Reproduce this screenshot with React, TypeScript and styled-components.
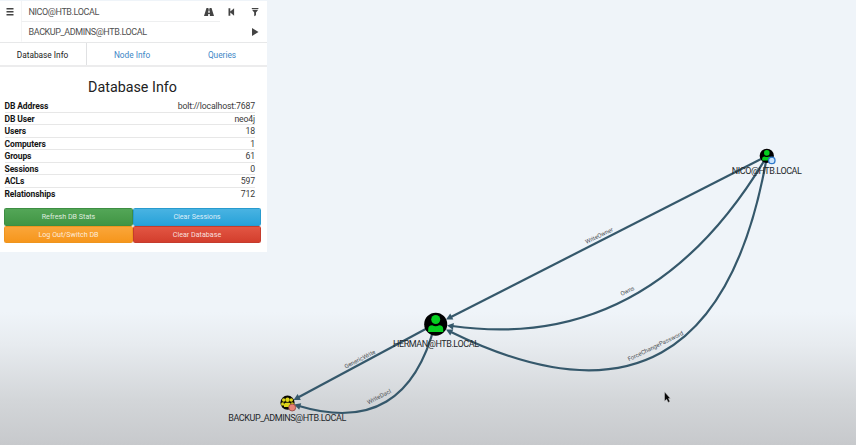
import React from "react";
import styled, { createGlobalStyle } from "styled-components";

const GlobalStyle = createGlobalStyle`
  *, *::before, *::after { box-sizing: border-box; }
  html, body { margin: 0; overflow: hidden; }
  body { font-family: Roboto, "Liberation Sans", sans-serif; }
`;

const Page = styled.div`
  display: grid;
  width: 856px;
  height: 445px;
  background: linear-gradient(#eff4f9 0, #eff4f9 312px, #e7ebef 345px, #d3d6d9 400px, #c7c9cc 445px);
`;

const Graph = styled.svg`
  grid-area: 1 / 1;
  display: block;
  width: 856px;
  height: 445px;
`;

const Panel = styled.section`
  grid-area: 1 / 1;
  z-index: 1;
  width: 267px;
  height: 251px;
  margin-top: 1px;
  background: #fff;
`;

const Search = styled.div`
  display: grid;
  grid-template-columns: 21px 199px 47px;
  grid-template-rows: 21px 20px;
  align-items: center;
  height: 41px;
  color: #444;
`;

const Field = styled.div<{ $line?: boolean }>`
  grid-column: 2;
  display: flex;
  align-items: center;
  justify-content: space-between;
  height: 100%;
  padding: 1px 6px 0 6.5px;
  border-left: 1px solid #f3f4f5;
  border-bottom: 1px solid ${(p) => (p.$line ? "#eeeff0" : "transparent")};
  font-size: 9px;
  letter-spacing: -0.4px;
  color: #505050;
`;

const Actions = styled.div`
  display: flex;
  align-items: center;
  justify-content: space-between;
  padding: 0 7px 0 7px;
`;

const PlayCell = styled.div`
  grid-column: 3;
  display: flex;
  justify-content: flex-end;
  padding-right: 7px;
`;

const Menu = styled.div`
  display: flex;
  padding-left: 6px;
`;

const Icon = styled.svg`
  display: block;
  width: 10px;
  height: 10px;
  fill: #444;
`;

const Tabs = styled.nav`
  display: grid;
  grid-template-columns: 87px 90px 90px;
  height: 25px;
  border-top: 1px solid #e7e8e9;
  border-bottom: 2px solid #ececed;
`;

const Tab = styled.div<{ $active?: boolean }>`
  display: flex;
  align-items: center;
  justify-content: center;
  padding-right: ${(p) => (p.$active ? "1px" : "0")};
  padding-top: 1px;
  font-size: 8.3px;
  color: ${(p) => (p.$active ? "#222" : "#3d86c6")};
  border-right: ${(p) => (p.$active ? "1px solid #e0e1e3" : "0")};
`;

const Title = styled.h1`
  margin: 10px 0 0;
  padding-right: 2px;
  height: 23px;
  font-size: 14.3px;
  line-height: 20px;
  font-weight: 400;
  text-align: center;
  color: #222;
`;

const Stats = styled.dl`
  margin: 0 12px 0 4.5px;
`;

const Stat = styled.div`
  display: flex;
  justify-content: space-between;
  height: 12.5px;
  font-size: 8.5px;
  line-height: 12px;
  color: #3a3a3a;
  &:not(:last-child) { border-bottom: 1px solid #e7e7e7; }
`;

const Name = styled.dt`
  font-weight: 700;
  color: #151515;
  letter-spacing: -0.1px;
`;

const Value = styled.dd`
  margin: 0;
  font-size: 8.7px;
  letter-spacing: -0.14px;
`;

const Buttons = styled.div`
  display: grid;
  grid-template-columns: 129px 128px;
  grid-template-rows: 17.5px 17.5px;
  margin: 8px 0 0 4px;
  width: 257px;
`;

const Button = styled.button<{ $from: string; $to: string; $edge: string }>`
  padding: 1px 0 0;
  border: 1px solid ${(p) => p.$edge};
  border-radius: 1.5px;
  background: linear-gradient(${(p) => p.$from}, ${(p) => p.$to});
  font: 7.15px/14px Roboto, sans-serif;
  color: rgba(255, 255, 255, 0.84);
`;

const EdgeLine = styled.path`
  fill: none;
  stroke: #35586b;
  stroke-width: 2.2;
`;

const EdgeText = styled.text`
  font: 6px Roboto, sans-serif;
  fill: #4c5054;
  text-anchor: middle;
`;

const NodeText = styled.text`
  font: 9px Roboto, sans-serif;
  fill: #24282b;
  text-anchor: middle;
`;

const stats = [
  ["DB Address", "bolt://localhost:7687"],
  ["DB User", "neo4j"],
  ["Users", "18"],
  ["Computers", "1"],
  ["Groups", "61"],
  ["Sessions", "0"],
  ["ACLs", "597"],
  ["Relationships", "712"],
];

const edges = [
  { d: "M767 156 L451 317", x: 600, y: 237.5, a: -26, label: "WriteOwner", w: 30 },
  { d: "M767 156 Q650 354 452 326", x: 628.3, y: 292.8, a: -27, label: "Owns", w: 14.5 },
  { d: "M767 156 Q714 461 451 332", x: 656.3, y: 348, a: -26, label: "ForceChangePassword", w: 61 },
  { d: "M435 324 L298 397.5", x: 360.8, y: 361, a: -27, label: "GenericWrite", w: 34 },
  { d: "M435 324 Q406 438 299 406", x: 380, y: 398.5, a: -27, label: "WriteDacl", w: 26 },
];

const arrows = [
  { x: 446, y: 319.5, a: 153 },
  { x: 447, y: 325.5, a: 188 },
  { x: 446, y: 329.5, a: 207 },
  { x: 293.5, y: 400, a: 152 },
  { x: 294, y: 404.5, a: 197 },
];

function Person() {
  return (
    <g>
      <circle r="11.5" fill="#000" />
      <g fill="#05cf20">
        <circle cy="-4.7" r="4.5" />
        <path d="M-7.5 7.7V4.8Q-7.5 1-3.5 1Q0 3 3.5 1Q7.5 1 7.5 4.8V7.7Z" />
      </g>
    </g>
  );
}

function NetworkGraph() {
  return (
    <Graph viewBox="0 0 856 445">
      {edges.map((e) => (
        <EdgeLine key={e.label} d={e.d} />
      ))}
      {arrows.map((a, i) => (
        <path key={i} d="M0 0L-6.5 -3.4V3.4Z" fill="#35586b" transform={`translate(${a.x} ${a.y}) rotate(${a.a})`} />
      ))}
      {edges.map((e) => (
        <EdgeText key={e.label} textLength={e.w} transform={`translate(${e.x} ${e.y}) rotate(${e.a})`}>
          {e.label}
        </EdgeText>
      ))}
      <g transform="translate(435.7 324.2)">
        <Person />
      </g>
      <g transform="translate(766.8 155.8) scale(.62)">
        <Person />
      </g>
      <circle cx="771.8" cy="160.4" r="3.2" fill="#c9e2fb" stroke="#2d78cc" strokeWidth="1.3" />
      <g transform="translate(287.5 402.7)">
        <circle r="7.1" fill="#080802" />
        <g fill="#ddd51a">
          <circle cx="-3.8" cy="-2.7" r="1.7" />
          <circle cx="3.8" cy="-2.7" r="1.7" />
          <circle cy="-3" r="2.2" />
          <path d="M-6.3 2.7V.9Q-6.3-.4-4-.4L-3.2 2.7ZM6.3 2.7V.9Q6.3-.4 4-.4L3.2 2.7ZM-3.5 4.3V2Q-3.5.1-1.5.1H1.5Q3.5.1 3.5 2V4.3Z" />
        </g>
      </g>
      <circle cx="292.2" cy="407.5" r="3.5" fill="#e88277" stroke="#8d443d" strokeWidth=".8" />
      <NodeText x="766.8" y="173.8" textLength="70">NICO@HTB.LOCAL</NodeText>
      <NodeText x="436" y="347" textLength="86">HERMAN@HTB.LOCAL</NodeText>
      <NodeText x="287.3" y="421" textLength="118">BACKUP_ADMINS@HTB.LOCAL</NodeText>
      <path d="M664.5 391.8V401.2L666.6 399.3L668.2 402.4L670 401.5L668.5 398.5H670.5Z" fill="#090909" stroke="#d5d6d8" strokeWidth=".5" />
    </Graph>
  );
}

export default function App() {
  return (
    <>
      <GlobalStyle />
      <Page>
        <NetworkGraph />
        <Panel>
          <Search>
            <Menu>
              <Icon viewBox="0 0 10 10"><path d="M.5 1H7.5V2.4H.5ZM.5 4H7.5V5.4H.5ZM.5 7H7.5V8.4H.5Z" /></Icon>
            </Menu>
            <Field $line>
              NICO@HTB.LOCAL
              <Icon viewBox="0 0 10 10"><path d="M2.5 1H4.5L4.4 2.5H5.6L5.5 1H7.5L10 9H5.9L5.8 7H4.2L4.1 9H0ZM4.4 3.6L4.2 5.7H5.8L5.6 3.6Z" /></Icon>
            </Field>
            <Actions>
              <Icon viewBox="0 0 10 10"><path d="M1.5 1.2H3.3V4.4L7.1 1.2V8.8L3.3 5.6V8.8H1.5Z" /></Icon>
              <Icon viewBox="0 0 10 10"><path d="M1.8 1H8.4V2.1H1.8ZM2 2.7H8.2L6 5.4V8.3L4.2 9.2V5.4Z" /></Icon>
            </Actions>
            <Field>BACKUP_ADMINS@HTB.LOCAL</Field>
            <PlayCell>
              <Icon viewBox="0 0 10 10"><path d="M2 1.1L8.5 5L2 8.9Z" /></Icon>
            </PlayCell>
          </Search>
          <Tabs>
            <Tab $active>Database Info</Tab>
            <Tab>Node Info</Tab>
            <Tab>Queries</Tab>
          </Tabs>
          <Title>Database Info</Title>
          <Stats>
            {stats.map(([name, value]) => (
              <Stat key={name}>
                <Name>{name}</Name>
                <Value>{value}</Value>
              </Stat>
            ))}
          </Stats>
          <Buttons>
            <Button $from="#53a657" $to="#419544" $edge="#3e8e43">Refresh DB Stats</Button>
            <Button $from="#49b3e2" $to="#28a2d9" $edge="#289bce">Clear Sessions</Button>
            <Button $from="#faa63a" $to="#f6961c" $edge="#ee951e">Log Out/Switch DB</Button>
            <Button $from="#e25643" $to="#d33e2d" $edge="#c53c2d">Clear Database</Button>
          </Buttons>
        </Panel>
      </Page>
    </>
  );
}
